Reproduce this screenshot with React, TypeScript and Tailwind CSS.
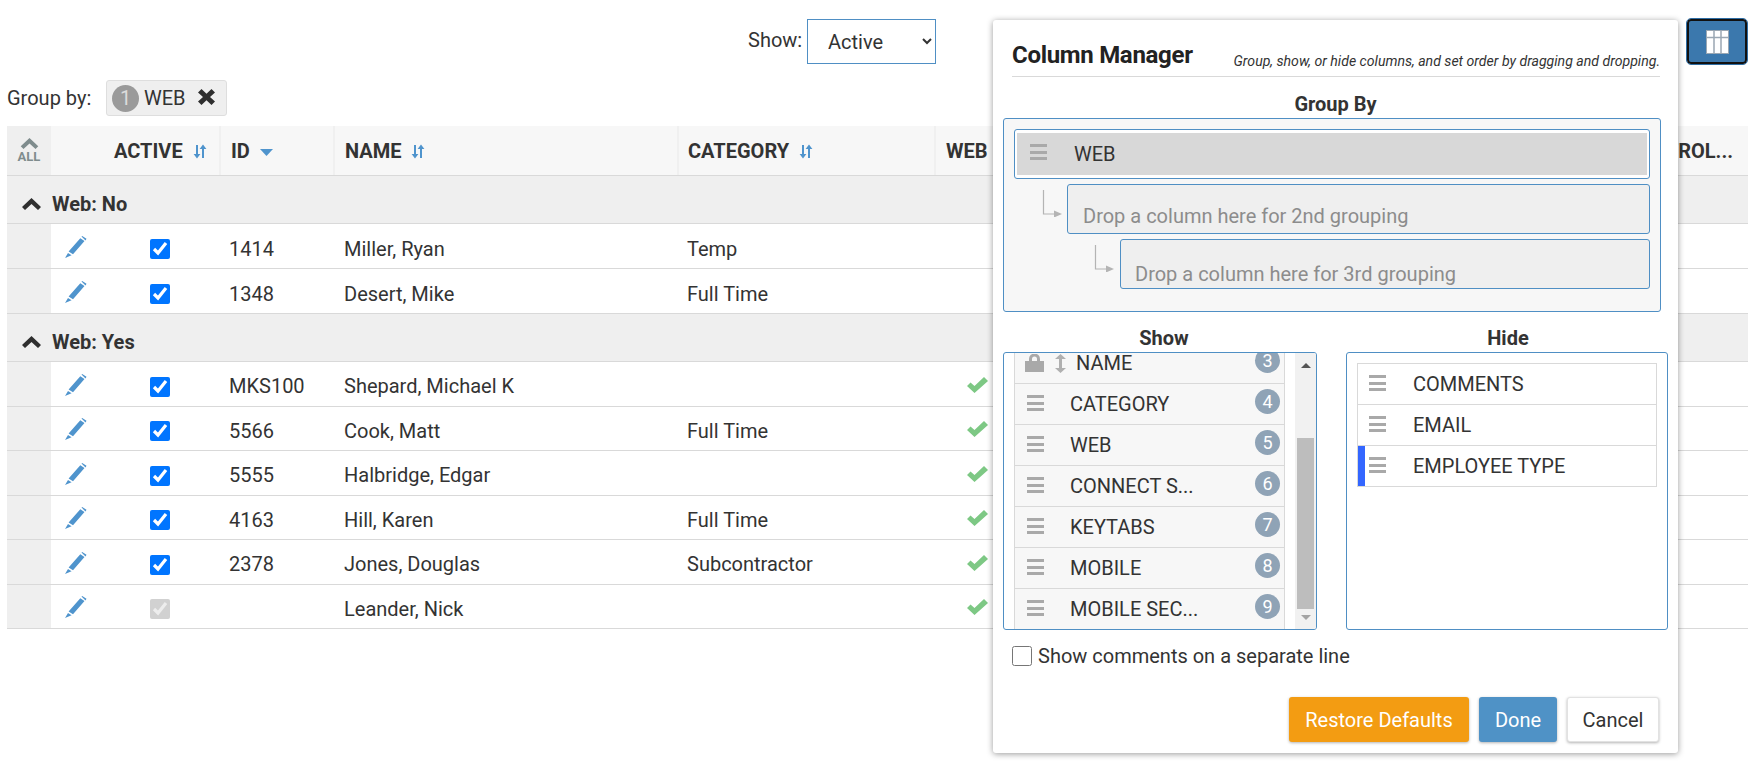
const rows1 = [
  { id: '1414', name: 'Miller, Ryan', cat: 'Temp' },
  { id: '1348', name: 'Desert, Mike', cat: 'Full Time' },
]
const rows2 = [
  { id: 'MKS100', name: 'Shepard, Michael K', cat: '' },
  { id: '5566', name: 'Cook, Matt', cat: 'Full Time' },
  { id: '5555', name: 'Halbridge, Edgar', cat: '' },
  { id: '4163', name: 'Hill, Karen', cat: 'Full Time' },
  { id: '2378', name: 'Jones, Douglas', cat: 'Subcontractor' },
  { id: '', name: 'Leander, Nick', cat: '', disabled: true },
]

function SortIcon() {
  return (
    <svg width="14" height="15" viewBox="0 0 14 15" className="mt-[2px]" fill="#4f94cd">
      <path d="M3 1h2v9h2.400L4 14.500.6 10H3z" />
      <path d="M9 14h2V5h2.400L10 .5 6.600 5H9z" />
    </svg>
  )
}

function ChevronUp({ className }: { className: string }) {
  return (
    <svg width="19" height="13" viewBox="0 0 19 13" className={className} fill="currentColor">
      <path d="M9.500 0 19 9l-3 3-6.500-6-6.500 6-3-3z" />
    </svg>
  )
}

function Pencil() {
  return (
    <svg width="22" height="22" viewBox="0 0 22 22" fill="#4f94cd">
      <path d="M16.500.6 17.200 0l4.300 2.800-1 1.600zM15.300 2.300l4.200 2.800L8 18.300l-4.400-2.800zM3 17l3.600 2.200L0 22z" />
    </svg>
  )
}

function WebCheck() {
  return (
    <svg width="21" height="16" viewBox="0 0 21 16" fill="#7dc884">
      <path d="M0 9 3.500 5.500 7.500 9 17 0l4 4L7.500 16z" />
    </svg>
  )
}

function Bars() {
  return (
    <div className="flex w-[17px] flex-col gap-[3.500px]">
      <div className="h-[3px] bg-[#a9a9a9]" />
      <div className="h-[3px] bg-[#a9a9a9]" />
      <div className="h-[3px] bg-[#a9a9a9]" />
    </div>
  )
}

function ElbowArrow() {
  return (
    <svg width="22" height="27" viewBox="0 0 22 27" fill="none" className="shrink-0">
      <path d="M1.500 0v24H13" stroke="#b4b4b4" strokeWidth="1.200" />
      <path d="M12 20.500 20 24l-8 3.500z" fill="#b4b4b4" />
    </svg>
  )
}

function HeadCell({ w, children }: { w: string; children?: React.ReactNode }) {
  return (
    <div className={`flex h-full shrink-0 items-center gap-[10px] border-r-2 border-[#f0f0f0] font-bold ${w}`}>
      {children}
    </div>
  )
}

function GroupRow({ label }: { label: string }) {
  return (
    <div className="flex h-[48px] items-center border-b border-[#d9d9d9] bg-[#efefef] pl-[15px] pt-[9px] font-bold">
      <ChevronUp className="mr-[11px] text-[#2f2f2f]" />
      {label}
    </div>
  )
}

function Row({ r, web, tall }: { r: { id: string; name: string; cat: string; disabled?: boolean }; web?: boolean; tall?: boolean }) {
  return (
    <div className={`flex border-b border-[#d9d9d9] ${tall ? 'h-[45px]' : 'h-[44.500px]'}`}>
      <div className="w-[44px] shrink-0 bg-[#efefef]" />
      <div className="flex w-[99px] shrink-0 items-center pl-[14px] pt-[2px]">
        <Pencil />
      </div>
      <div className="flex w-[79px] shrink-0 items-center pt-[6px]">
        <input type="checkbox" checked readOnly disabled={r.disabled} className="h-5 w-5" />
      </div>
      <div className="flex w-[115px] shrink-0 items-center pt-[5px]">{r.id}</div>
      <div className="flex w-[343px] shrink-0 items-center pt-[5px]">{r.name}</div>
      <div className="flex w-[280px] shrink-0 items-center pt-[5px]">{r.cat}</div>
      <div className="flex items-center pt-[2px]">{web ? <WebCheck /> : null}</div>
    </div>
  )
}

function ShowRow({ n, label, first }: { n: number; label: string; first?: boolean }) {
  return (
    <div className={`flex h-[41px] shrink-0 items-start border-x border-b border-[#d9d9d9] bg-[#f7f7f7] ${first ? '-mt-[10px]' : ''}`}>
      {first ? (
        <>
          <svg width="19" height="18" viewBox="0 0 19 18" fill="#a9a9a9" className="ml-[10px] mt-[11px]">
            <path d="M4 7V5a5.500 5.500 0 0 1 11 0v2h4v11H0V7zm3 0h5V5a2.500 2.500 0 0 0-5 0z" />
          </svg>
          <svg width="11" height="19" viewBox="0 0 11 19" fill="#b0b0b0" className="ml-[11px] mt-[11px]">
            <path d="M5.500 0 11 5H7v9h4l-5.500 5L0 14h4V5H0z" />
          </svg>
          <div className="ml-[10px] leading-[41px]">{label}</div>
        </>
      ) : (
        <>
          <div className="ml-[12px] mt-[11px]">
            <Bars />
          </div>
          <div className="ml-[26px] leading-[41px]">{label}</div>
        </>
      )}
      <div className="ml-auto mr-[4px] mt-[5px] flex h-[25px] w-[25px] items-center justify-center rounded-full bg-[#8fa3b6] text-[18px] text-white">
        {n}
      </div>
    </div>
  )
}

function HideRow({ label, mark }: { label: string; mark?: boolean }) {
  return (
    <div className="flex h-[41px] items-start border-b border-[#d9d9d9]">
      <div className={`h-full w-[7px] shrink-0 ${mark ? 'bg-[#3366ff]' : ''}`} />
      <div className="ml-[4px] mt-[11px]">
        <Bars />
      </div>
      <div className="ml-[27px] leading-[41px]">{label}</div>
    </div>
  )
}

export default function App() {
  return (
    <div className="relative h-[762px] w-[1757px] overflow-hidden bg-white font-['Roboto',sans-serif] text-[20px] text-[#333]">
      <div className="flex h-[80px] items-start pt-[19px]">
        <div className="ml-[748px] w-[59px] leading-[43px]">Show:</div>
        <select className="h-[45px] w-[129px] border border-[#4f8fc4] pl-[16px] pr-[2px]" defaultValue="Active">
          <option>Active</option>
        </select>
        <button className="ml-auto mr-[10px] flex h-[45px] w-[60px] items-center justify-center rounded-[4px] border-[2px] border-[#111] bg-[#3b78ad] outline outline-1 outline-[#2e6da4]">
          <svg width="23" height="24" viewBox="0 0 23 24">
            <rect x="0.500" y="0.500" width="22" height="23" fill="#fff" stroke="#9aa7b3" />
            <path d="M8 1v22M15 1v22M1 7.500h21" stroke="#9aa7b3" strokeWidth="1.500" />
          </svg>
        </button>
      </div>

      <div className="flex h-[46px] items-start pl-[7px]">
        <div className="w-[99px] leading-[36px]">Group by:</div>
        <div className="flex h-[36px] w-[121px] items-center rounded-[3px] border border-[#dedede] bg-[#efefef] pl-[5px]">
          <div className="mr-[5px] flex h-[27px] w-[27px] items-center justify-center rounded-full bg-[#9a9a9a] text-[#dcdcdc]">
            1
          </div>
          WEB
          <svg width="17" height="16" viewBox="0 0 17 16" fill="#2f2f2f" className="mb-[3px] ml-[12px]">
            <path d="M0 3.500 3.500 0l5 4.800L13.500 0 17 3.500 12 8l5 4.500-3.500 3.500-5-4.800-5 4.800L0 12.500 5 8z" />
          </svg>
        </div>
      </div>

      <div className="ml-[7px] mr-[9px]">
        <div className="flex h-[50px] border-b border-[#d9d9d9] bg-[#f7f7f7]">
          <div className="flex w-[44px] shrink-0 flex-col items-center justify-center bg-[#efefef] text-[#7f8c8d]">
            <ChevronUp className="h-[12px] w-[19px]" />
            <div className="text-[13px] font-bold leading-[14px]">ALL</div>
          </div>
          <HeadCell w="w-[170px] pl-[63px]">
            ACTIVE <SortIcon />
          </HeadCell>
          <HeadCell w="w-[114px] pl-[10px]">
            ID
            <svg width="13" height="7" viewBox="0 0 13 7" fill="#4f94cd" className="mt-[3px]">
              <path d="M0 0h13L6.500 7z" />
            </svg>
          </HeadCell>
          <HeadCell w="w-[344px] pl-[10px]">
            NAME <SortIcon />
          </HeadCell>
          <HeadCell w="w-[257px] pl-[9px]">
            CATEGORY <SortIcon />
          </HeadCell>
          <HeadCell w="w-[300px] pl-[10px]">WEB</HeadCell>
          <div className="flex flex-1 items-center justify-end pr-[15px] font-bold">CONTROL...</div>
        </div>
        <GroupRow label="Web: No" />
        {rows1.map((r) => (
          <Row key={r.name} r={r} tall />
        ))}
        <GroupRow label="Web: Yes" />
        {rows2.map((r) => (
          <Row key={r.name} r={r} web />
        ))}
      </div>

      {/* column manager popup */}
      <div className="absolute left-[993px] top-[20px] h-[733px] w-[685px] rounded-[3px] bg-white shadow-[0_1px_6px_rgba(0,0,0,0.4)]">
        <div className="ml-[19px] flex h-[57px] w-[648px] items-end justify-between border-b border-[#d9d9d9] pb-[3px]">
          <div className="text-[24px] font-bold leading-[36px] tracking-[-0.3px] text-[#222]">Column Manager</div>
          <div className="text-[14.100px] italic leading-[24px]">Group, show, or hide columns, and set order by dragging and dropping.</div>
        </div>

        <div className="mt-[13px] w-full text-center font-bold leading-[28px]">Group By</div>
        <div className="ml-[10px] h-[194px] w-[658px] rounded-[3px] border border-[#4f8fc4] bg-[#f7f7f7] pl-[10px] pr-[10px] pt-[10px]">
          <div className="h-[50px] rounded-[3px] border border-[#4f8fc4] bg-white px-[2px] py-[3px]">
            <div className="flex h-full items-center bg-[#d8d8d8] pl-[13px]">
              <div className="mb-[4px]">
                <Bars />
              </div>
              <div className="ml-[27px]">WEB</div>
            </div>
          </div>
          <div className="mt-[5px] flex items-start">
            <div className="ml-[28px] mr-[3px] mt-[6px]">
              <ElbowArrow />
            </div>
            <div className="h-[50px] flex-1 rounded-[3px] border border-[#4f8fc4] bg-[#efefef] pl-[15px] pt-[17px] leading-[28px] text-[#8c8c8c]">
              Drop a column here for 2nd grouping
            </div>
          </div>
          <div className="mt-[5px] flex items-start">
            <div className="ml-[80px] mr-[4px] mt-[6px]">
              <ElbowArrow />
            </div>
            <div className="h-[50px] flex-1 rounded-[3px] border border-[#4f8fc4] bg-[#efefef] pl-[14px] pt-[20px] leading-[28px] text-[#8c8c8c]">
              Drop a column here for 3rd grouping
            </div>
          </div>
        </div>

        <div className="mt-[12px] flex">
          <div className="ml-[10px] w-[314px]">
            <div className="pl-[8px] text-center font-bold leading-[28px]">Show</div>
            <div className="flex h-[278px] overflow-hidden rounded-[3px] border border-[#4f8fc4]">
              <div className="ml-[10px] flex w-[271px] flex-col">
                <ShowRow first n={3} label="NAME" />
                <ShowRow n={4} label="CATEGORY" />
                <ShowRow n={5} label="WEB" />
                <ShowRow n={6} label="CONNECT S..." />
                <ShowRow n={7} label="KEYTABS" />
                <ShowRow n={8} label="MOBILE" />
                <ShowRow n={9} label="MOBILE SEC..." />
              </div>
              <div className="ml-auto flex w-[21px] flex-col items-center bg-[#f1f1f1]">
                <div className="mt-[10px] h-0 w-0 border-x-[5px] border-b-[5px] border-x-transparent border-b-[#555]" />
                <div className="mt-[70px] h-[171px] w-[17px] bg-[#bdbdbd]" />
                <div className="mt-[6px] h-0 w-0 border-x-[5px] border-t-[5px] border-x-transparent border-t-[#a3a3a3]" />
              </div>
            </div>
          </div>
          <div className="ml-[29px] w-[322px]">
            <div className="pl-[2px] text-center font-bold leading-[28px]">Hide</div>
            <div className="h-[278px] rounded-[3px] border border-[#4f8fc4] pl-[10px] pr-[10px] pt-[10px]">
              <div className="border-x border-t border-[#d9d9d9]">
                <HideRow label="COMMENTS" />
                <HideRow label="EMAIL" />
                <HideRow label="EMPLOYEE TYPE" mark />
              </div>
            </div>
          </div>
        </div>

        <label className="ml-[19px] mt-[16px] flex h-[20px] items-center gap-[6px]">
          <input type="checkbox" readOnly className="h-5 w-5" />
          Show comments on a separate line
        </label>

        <div className="mt-[31px] flex justify-end gap-[10px] pr-[19px]">
          <button className="h-[45px] w-[180px] rounded-[3px] bg-[#f39c12] text-white shadow-[0_1px_3px_rgba(0,0,0,0.3)]">Restore Defaults</button>
          <button className="h-[45px] w-[78px] rounded-[3px] bg-[#4f92c6] text-white shadow-[0_1px_3px_rgba(0,0,0,0.3)]">Done</button>
          <button className="h-[45px] w-[92px] rounded-[3px] border border-[#e2e2e2] bg-white shadow-[0_1px_3px_rgba(0,0,0,0.3)]">Cancel</button>
        </div>
      </div>
    </div>
  )
}
